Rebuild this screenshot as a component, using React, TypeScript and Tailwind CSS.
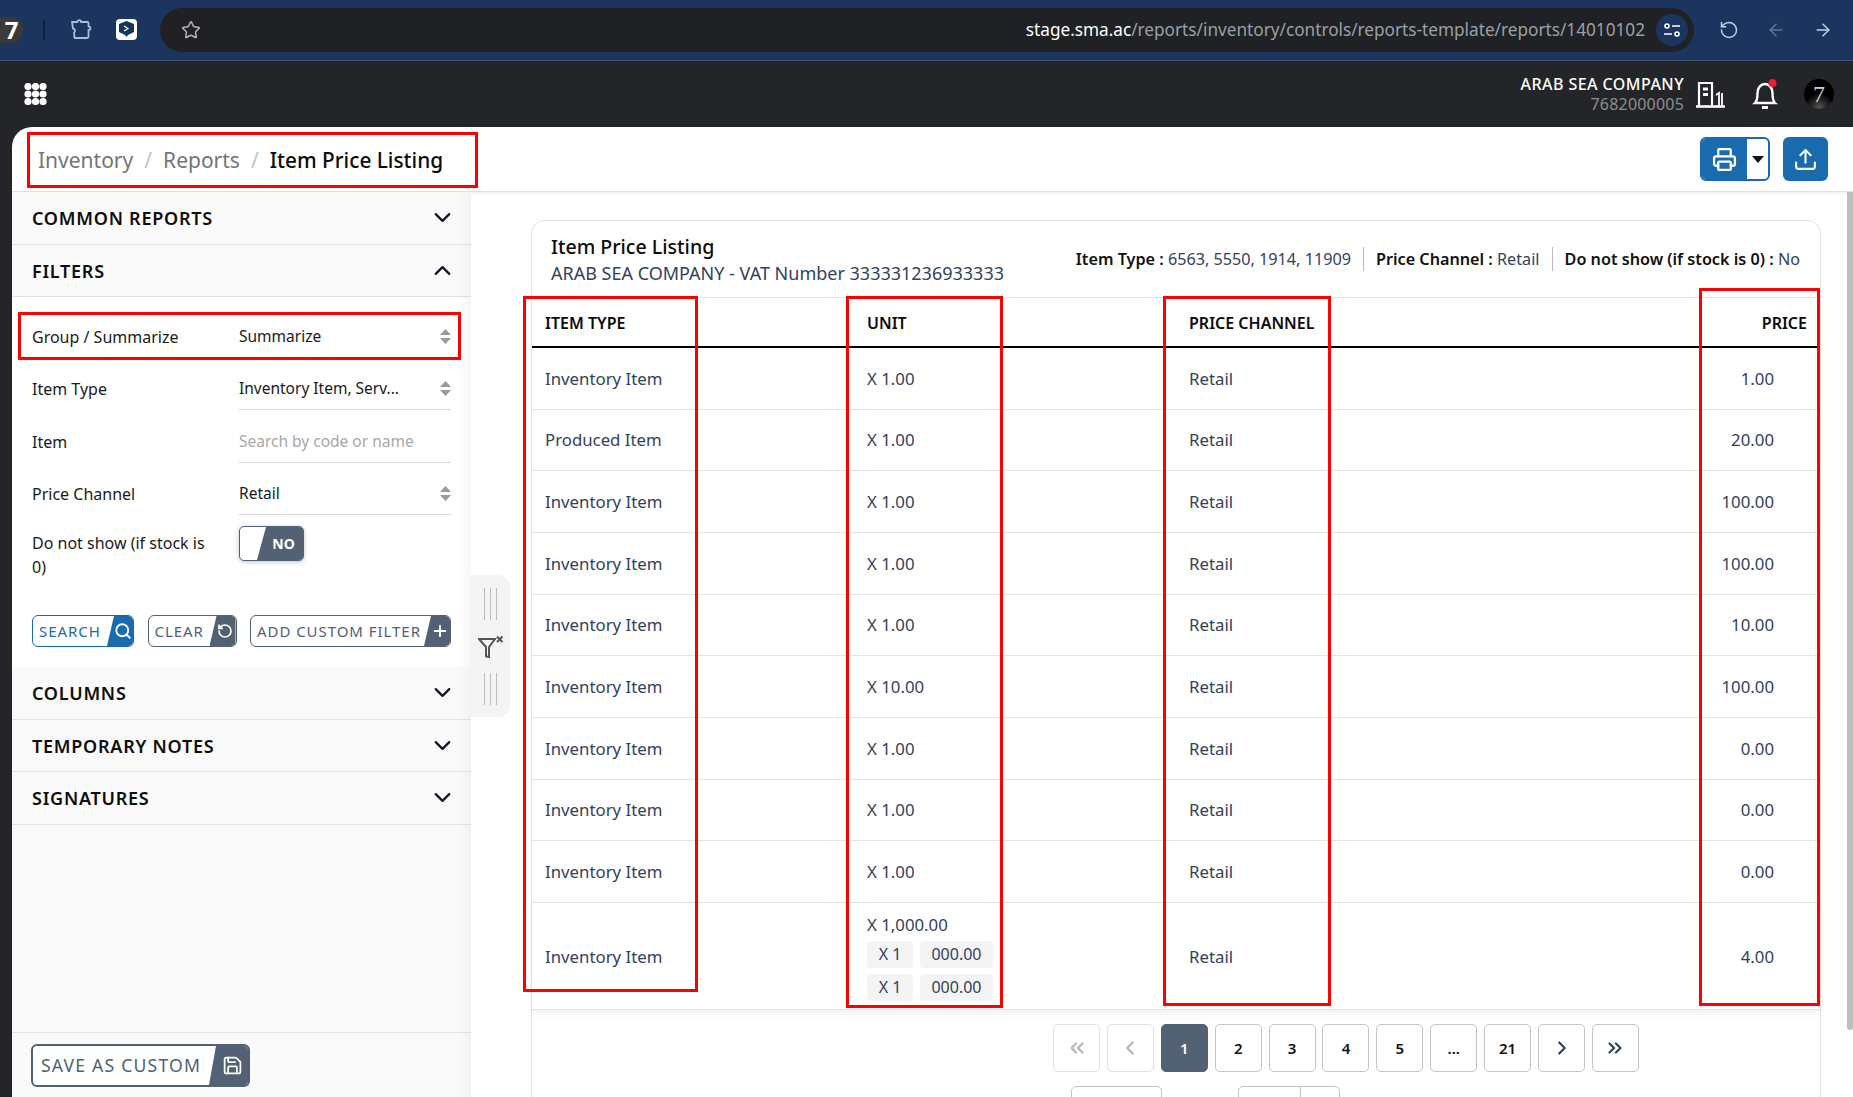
import {
  ArrowLeft,
  ArrowRight,
  ChevronDown,
  ChevronLeft,
  ChevronRight,
  ChevronsLeft,
  ChevronsRight,
  ChevronUp,
  Plus,
  Printer,
  RotateCcw,
  Save,
  Search,
  Star,
  Upload,
} from "lucide-react";
import type { ReactNode } from "react";

const rows = [
  ["Inventory Item", "X 1.00", "Retail", "1.00"],
  ["Produced Item", "X 1.00", "Retail", "20.00"],
  ["Inventory Item", "X 1.00", "Retail", "100.00"],
  ["Inventory Item", "X 1.00", "Retail", "100.00"],
  ["Inventory Item", "X 1.00", "Retail", "10.00"],
  ["Inventory Item", "X 10.00", "Retail", "100.00"],
  ["Inventory Item", "X 1.00", "Retail", "0.00"],
  ["Inventory Item", "X 1.00", "Retail", "0.00"],
  ["Inventory Item", "X 1.00", "Retail", "0.00"],
];

function SortArrows() {
  return (
    <svg width="11" height="15" viewBox="0 0 11 15" className="shrink-0">
      <path d="M5.5 0 L11 6 H0 Z M5.5 15 L0 9 H11 Z" fill="#9a9a9a" />
    </svg>
  );
}

function SectionHeader({ title, open, white }: { title: string; open?: boolean; white?: boolean }) {
  const Icon = open ? ChevronUp : ChevronDown;
  return (
    <div className={`flex h-[52.5px] items-center justify-between border-b border-[#e2e2e2] pl-5 pr-[15px] ${white ? "" : "bg-[#fafafa]"}`}>
      <span className="pt-[2px] text-[18px] font-semibold tracking-[0.75px] text-[#0d0d0d]">{title}</span>
      <Icon size={27} strokeWidth={2} className="text-[#101828]" />
    </div>
  );
}

function FieldRow({ label, children, noLine, arrows }: { label: string; children: ReactNode; noLine?: boolean; arrows?: boolean }) {
  return (
    <div className="flex h-[52.5px]">
      <div className="flex w-[207px] items-center pt-[11px] text-[16px] text-[#1a1a1a]">{label}</div>
      <div className={`flex flex-1 items-center justify-between pt-[11px] text-[15.5px] text-[#1a1a1a] ${noLine ? "" : "border-b border-[#d9d9d9]"}`}>
        {children}
        {arrows && <SortArrows />}
      </div>
    </div>
  );
}

function SlantButton({ label, color, width, icon, big }: { label: string; color: string; width: string; icon: ReactNode; big?: boolean }) {
  const blue = color === "blue";
  return (
    <div className={`flex overflow-hidden rounded-[6px] border bg-white ${width} ${big ? "h-[43px] border-2" : "h-[32px]"} ${blue ? "border-[#1a6ab0] text-[#1a6ab0]" : "border-[#526173] text-[#526173]"}`}>
      <span className={`flex flex-1 items-center whitespace-nowrap ${big ? "pl-2 text-[17.6px] tracking-[1.2px]" : "pl-[6px] text-[15px] tracking-[0.95px]"}`}>{label}</span>
      <span className={`flex items-center justify-center text-white [clip-path:polygon(7px_0,100%_0,100%_100%,0_100%)] ${big ? "w-[39px] pl-2" : "w-[26px] pl-[5px]"} ${blue ? "bg-[#1a6ab0]" : "bg-[#526173]"}`}>
        {icon}
      </span>
    </div>
  );
}

function PageButton({ children, active, muted }: { children: ReactNode; active?: boolean; muted?: boolean }) {
  return (
    <div className={`flex h-[48px] w-[47px] items-center justify-center rounded-[5px] border text-[15px] font-semibold ${active ? "border-[#526173] bg-[#526173] text-white" : muted ? "border-[#e2e2e2] text-[#b5b5b5]" : "border-[#c4c4c4] text-[#111]"}`}>
      {children}
    </div>
  );
}

function Grip() {
  return (
    <div className="flex h-[32px] justify-center gap-[4.5px]">
      <span className="w-[1.5px] bg-[#bdbdbd]" />
      <span className="w-[1.5px] bg-[#bdbdbd]" />
      <span className="w-[1.5px] bg-[#bdbdbd]" />
    </div>
  );
}

function BrowserBar() {
  return (
    <div className="flex h-[61px] items-center border-b border-[#3a5478] bg-[#1c355e] pb-[1px]">
      <div className="flex h-[26px] w-[23px] items-center justify-center rounded-r-full bg-[#3a3a3a] text-[24px] font-bold text-white">7</div>
      <span className="ml-[20px] h-[20px] w-[2px] bg-[#10213d]" />
      <svg width="22" height="22" viewBox="0 0 22 22" fill="none" stroke="#a9bcd8" strokeWidth="1.8" strokeLinejoin="round" className="ml-[25px]">
        <path d="M2 3h5.5c0-2.6 3.5-2.6 3.5 0h6.5c.8 0 1 .5 1 1.200v3.300c2.600 0 2.600 3.500 0 3.500v6.500c0 1.200-.6 1.500-1.500 1.500H4.500l-.5-5.500c1.500-.5 1.500-3.500-1-4L2 3Z" />
      </svg>
      <div className="ml-[24px] flex h-[21px] w-[21px] items-center justify-center rounded-[4px] bg-white">
        <svg width="15" height="17" viewBox="0 0 15 17">
          <path d="M7.500 0 15 3v8l-6 3-1.500 2-1.500-2-6-3V3Z" fill="#14365c" />
          <path d="M5 5l4 2.500L5 10" fill="none" stroke="#fff" strokeWidth="1.2" />
        </svg>
      </div>
      <div className="ml-[23px] flex h-[44px] w-[1534px] items-center rounded-full bg-[#202124] pl-[21px] pr-[6px]">
        <Star size={20} strokeWidth={1.8} className="text-[#b5b5b5]" />
        <div className="ml-auto whitespace-nowrap text-[17.2px] text-[#9aa0a6]">
          <span className="text-white">stage.sma.ac</span>/reports/inventory/controls/reports-template/reports/14010102
        </div>
        <div className="ml-[11px] flex h-[32px] w-[32px] items-center justify-center rounded-full bg-[#1c355e]">
          <svg width="18" height="18" viewBox="0 0 18 18" fill="none" stroke="#fff" strokeWidth="1.6">
            <circle cx="4" cy="5" r="2" />
            <path d="M9 5h8M1 13h8" />
            <circle cx="14" cy="13" r="2" />
          </svg>
        </div>
      </div>
      <RotateCcw size={20} strokeWidth={1.8} className="ml-[25px] text-[#c4d0e2]" />
      <ArrowLeft size={20} strokeWidth={1.8} className="ml-[27px] text-[#5f7596]" />
      <ArrowRight size={20} strokeWidth={1.8} className="ml-[27px] text-[#c4d0e2]" />
    </div>
  );
}

function TopHeader() {
  return (
    <div className="flex h-[66px] items-center justify-between bg-[#232528] pl-6 pr-[19px]">
      <svg width="23" height="22" viewBox="0 0 23 22" fill="#fff">
        {[4, 11.5, 19].map((cx) =>
          [3.5, 11, 18.5].map((cy) => <circle key={`${cx}-${cy}`} cx={cx} cy={cy} r="3.6" />),
        )}
      </svg>
      <div className="flex items-center">
        <div className="mr-[11px] flex flex-col gap-[2px] text-right">
          <div className="text-[16px] font-medium leading-[18px] tracking-[0.45px] text-white">ARAB SEA COMPANY</div>
          <div className="text-[16px] leading-[18px] tracking-[0.2px] text-[#8d8d8d]">7682000005</div>
        </div>
        <svg width="30" height="27" viewBox="0 0 30 27" fill="none" stroke="#fff" strokeWidth="2.2">
          <path d="M4 25V2h13v23" />
          <path d="M1 25.500h29" strokeWidth="2.600" />
          <path d="M8 8h5M8 13.500h5" strokeWidth="3" />
          <path d="M21 14l3-2v13M27 25V12" strokeWidth="1.800" />
        </svg>
        <svg width="26" height="32" viewBox="0 0 26 32" fill="none" stroke="#fff" strokeWidth="2.4" className="ml-[27px]">
          <path d="M3 25c1.800-1.800 2.500-4 2.500-10 0-5 3.200-9 7.500-9s7.500 4 7.500 9c0 6 .7 8.200 2.500 10H3Z" />
          <path d="M10 29.500h6" strokeWidth="3" />
          <circle cx="20.500" cy="5" r="4" fill="#f01b2d" stroke="none" />
        </svg>
        <div className="ml-[26px] flex h-[30px] w-[30px] items-center justify-center rounded-full bg-black bg-[radial-gradient(circle_at_50%_95%,#555,#000_45%)] font-['Liberation_Serif',serif] text-[24px] font-light text-[#d0d0d0]">7</div>
      </div>
    </div>
  );
}

function Toolbar() {
  return (
    <div className="flex h-[65px] shrink-0 items-center justify-between border-b border-[#dedede] pl-[26px] pr-[25px] shadow-[0_1px_3px_rgba(0,0,0,0.08)]">
      <div className="flex items-center pt-[4px] text-[21px]">
        <span className="text-[#757575]">Inventory</span>
        <span className="mx-[11px] text-[#c4c4c4]">/</span>
        <span className="text-[#757575]">Reports</span>
        <span className="mx-[11px] text-[#c4c4c4]">/</span>
        <span className="text-[20.8px] font-medium text-[#0a0a0a]">Item Price Listing</span>
      </div>
      <div className="flex items-center gap-[13px]">
        <div className="flex h-[44px] w-[70px] overflow-hidden rounded-[6px] border-2 border-[#1a6ab0] bg-white">
          <span className="flex w-[45px] items-center justify-center bg-[#1a6ab0]">
            <Printer size={25} strokeWidth={2.2} className="text-white" />
          </span>
          <span className="flex flex-1 items-center justify-center">
            <svg width="12" height="7" viewBox="0 0 12 7"><path d="M0 0h12L6 7z" fill="#111" /></svg>
          </span>
        </div>
        <div className="flex h-[44px] w-[45px] items-center justify-center rounded-[6px] bg-[#1a6ab0]">
          <Upload size={25} strokeWidth={2} className="text-white" />
        </div>
      </div>
    </div>
  );
}

function Sidebar() {
  return (
    <aside className="relative flex w-[459px] shrink-0 flex-col bg-[#fafafa]">
      <SectionHeader title="COMMON REPORTS" />
      <SectionHeader title="FILTERS" open />
      <div className="h-[370px] bg-white pl-5 pr-[20px] pt-[8px]">
        <FieldRow label="Group / Summarize" noLine arrows>Summarize</FieldRow>
        <FieldRow label="Item Type" arrows>Inventory Item, Serv...</FieldRow>
        <FieldRow label="Item"><span className="text-[#a8a8a8]">Search by code or name</span></FieldRow>
        <FieldRow label="Price Channel" arrows>Retail</FieldRow>
        <div className="flex">
          <div className="w-[190px] pt-[16px] text-[16px] leading-[24px] text-[#1a1a1a]">Do not show (if stock is 0)</div>
          <div className="ml-[17px] mt-[11px] flex h-[35px] w-[65px] overflow-hidden rounded-[5px] border border-[#526173] bg-white shadow-[0_1px_4px_rgba(0,0,0,0.25)]">
            <span className="w-[17px]" />
            <span className="flex flex-1 items-center justify-center bg-[#526173] pl-[7px] text-[14px] font-bold text-white [clip-path:polygon(9px_0,100%_0,100%_100%,0_100%)]">NO</span>
          </div>
        </div>
        <div className="mt-[36px] flex justify-between">
          <SlantButton label="SEARCH" color="blue" width="w-[102px]" icon={<Search size={18} strokeWidth={2.5} />} />
          <SlantButton label="CLEAR" color="slate" width="w-[89px]" icon={<RotateCcw size={16} strokeWidth={2.5} />} />
          <SlantButton label="ADD CUSTOM FILTER" color="slate" width="w-[201px]" icon={<Plus size={18} strokeWidth={2.5} />} />
        </div>
      </div>
      <SectionHeader title="COLUMNS" />
      <SectionHeader title="TEMPORARY NOTES" />
      <SectionHeader title="SIGNATURES" />
      <div className="flex-1" />
      <div className="h-[65px] shrink-0 border-t border-[#e2e2e2] pl-[19px] pt-[11px]">
        <SlantButton label="SAVE AS CUSTOM" color="slate" width="w-[219px]" big icon={<Save size={21} strokeWidth={2} />} />
      </div>
      <div className="absolute inset-y-0 right-0 w-[13px] bg-gradient-to-r from-transparent to-[#00000008]" />
    </aside>
  );
}

function ReportCard() {
  return (
    <div className="rounded-t-[14px] border border-b-0 border-[#e4e4e4]">
      <div className="flex h-[77px] items-center justify-between border-b border-[#e4e4e4] pl-[19px] pr-[20px]">
        <div className="pt-[2px]">
          <div className="text-[19.6px] font-medium leading-[26px] text-[#0a0a0a]">Item Price Listing</div>
          <div className="text-[18px] leading-[26px] text-[#33415c]">ARAB SEA COMPANY - VAT Number 333331236933333</div>
        </div>
        <div className="flex items-center text-[16.2px] text-[#33415c]">
          <span className="border-r border-[#bbb] pr-[12px]"><b className="font-semibold text-[#111]">Item Type : </b>6563, 5550, 1914, 11909</span>
          <span className="border-r border-[#bbb] px-[12px]"><b className="font-semibold text-[#111]">Price Channel : </b>Retail</span>
          <span className="pl-[12px]"><b className="font-semibold text-[#111]">Do not show (if stock is 0) : </b>No</span>
        </div>
      </div>
      <div className="grid h-[50px] grid-cols-4 items-center border-b-2 border-black pt-[1px] text-[16px] font-semibold text-[#0a0a0a]">
        <span className="pl-[13px]">ITEM TYPE</span>
        <span className="pl-[13px]">UNIT</span>
        <span className="pl-[13px]">PRICE CHANNEL</span>
        <span className="pr-[13px] text-right">PRICE</span>
      </div>
      {rows.map((row, i) => (
        <div key={i} className="grid h-[61.67px] grid-cols-4 items-center border-b border-[#e4e4e4] text-[16.8px] text-[#33415c]">
          <span className="pl-[13px]">{row[0]}</span>
          <span className="pl-[13px]">{row[1]}</span>
          <span className="pl-[13px]">{row[2]}</span>
          <span className="pr-[46px] text-right">{row[3]}</span>
        </div>
      ))}
      <div className="grid h-[107px] grid-cols-4 items-center border-b border-[#e4e4e4] pt-[2px] text-[16.8px] text-[#33415c] shadow-[0_3px_8px_rgba(0,0,0,0.06)]">
        <span className="pl-[13px]">Inventory Item</span>
        <div className="pl-[13px]">
          <div className="leading-[24px]">X 1,000.00</div>
          <div className="mt-[4px] flex flex-col gap-[6px] text-[16px]">
            {[0, 1].map((n) => (
              <div key={n} className="flex gap-[7px]">
                <span className="flex h-[27px] w-[46px] items-center justify-center rounded-[4px] bg-[#f4f4f4]">X 1</span>
                <span className="flex h-[27px] w-[73px] items-center justify-center rounded-[4px] bg-[#f4f4f4]">000.00</span>
              </div>
            ))}
          </div>
        </div>
        <span className="pl-[13px]">Retail</span>
        <span className="pr-[46px] text-right">4.00</span>
      </div>
      <div className="pl-[521px] pt-[14px]">
        <div className="flex gap-[6.9px]">
          <PageButton muted><ChevronsLeft size={22} strokeWidth={2.4} /></PageButton>
          <PageButton muted><ChevronLeft size={22} strokeWidth={2.4} /></PageButton>
          <PageButton active>1</PageButton>
          <PageButton>2</PageButton>
          <PageButton>3</PageButton>
          <PageButton>4</PageButton>
          <PageButton>5</PageButton>
          <PageButton>...</PageButton>
          <PageButton>21</PageButton>
          <PageButton><ChevronRight size={22} strokeWidth={2.4} className="text-[#33415c]" /></PageButton>
          <PageButton><ChevronsRight size={22} strokeWidth={2.4} className="text-[#33415c]" /></PageButton>
        </div>
        <div className="mt-[14px] flex pl-[18px]">
          <div className="h-[40px] w-[91px] rounded-[5px] border border-[#c4c4c4]" />
          <div className="ml-[76px] flex h-[40px] w-[102px] rounded-[5px] border border-[#c4c4c4]">
            <span className="w-[62px] border-r border-[#c4c4c4]" />
          </div>
        </div>
      </div>
    </div>
  );
}

export default function App() {
  return (
    <div className="relative flex h-[1097px] w-[1853px] flex-col overflow-hidden bg-[#232528] font-['Noto_Sans',sans-serif]">
      <BrowserBar />
      <TopHeader />
      <div className="ml-3 flex min-h-0 flex-1 flex-col overflow-hidden rounded-tl-[20px] bg-white">
        <Toolbar />
        <div className="flex min-h-0 flex-1">
          <Sidebar />
          <div className="mt-[383px] flex h-[142px] w-[39px] shrink-0 flex-col items-center justify-center gap-[15px] self-start rounded-r-[12px] bg-[#f4f4f4]">
            <Grip />
            <svg width="26" height="23" viewBox="0 0 26 23" fill="none" stroke="#555" strokeWidth="2">
              <path d="M1 4h16l-6 8v10l-3-.5V12L1 4Z" />
              <path d="M19 1.500l5.500 5.500M24.500 1.500 19 7" />
            </svg>
            <Grip />
          </div>
          <div className="min-w-0 flex-1 pl-[21px] pr-[26px] pt-[28px]">
            <ReportCard />
          </div>
          <div className="w-[6px] shrink-0">
            <div className="h-[838px] rounded-b-[3px] bg-[#bdbdbd]" />
          </div>
        </div>
      </div>

      {/* red annotation boxes drawn over the screenshot */}
      <div className="absolute left-[27px] top-[132px] h-[56px] w-[451px] border-[3px] border-[#ff0000]" />
      <div className="absolute left-[18px] top-[312px] h-[48px] w-[443px] border-[3px] border-[#ff0000]" />
      <div className="absolute left-[523px] top-[296px] h-[696px] w-[175px] border-[3px] border-[#ff0000]" />
      <div className="absolute left-[846px] top-[296px] h-[712px] w-[157px] border-[3px] border-[#ff0000]" />
      <div className="absolute left-[1163px] top-[296px] h-[710px] w-[168px] border-[3px] border-[#ff0000]" />
      <div className="absolute left-[1699px] top-[288px] h-[718px] w-[121px] border-[3px] border-[#ff0000]" />
    </div>
  );
}
